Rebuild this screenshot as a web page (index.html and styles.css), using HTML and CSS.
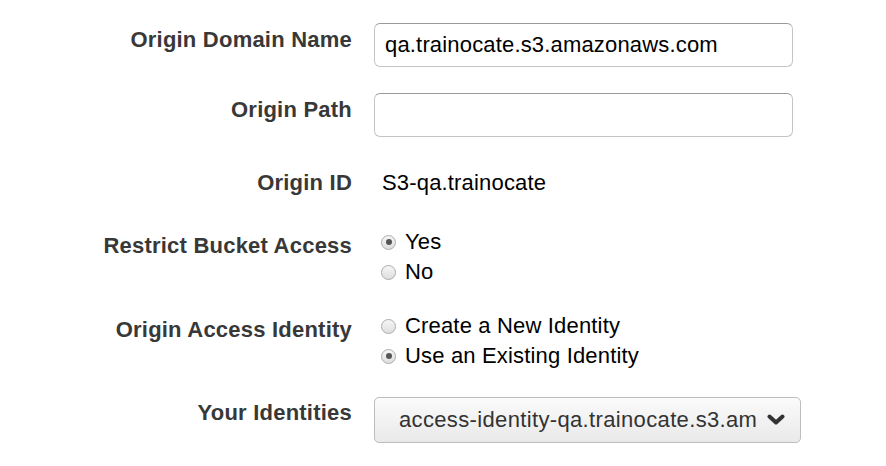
FILE: index.html
```html
<!DOCTYPE html>
<html>
<head>
<meta charset="utf-8">
<link rel="stylesheet" href="styles.css">
</head>
<body>
<form class="form">
  <div class="row row-domain">
    <label class="label label-input">Origin Domain Name</label>
    <div class="control"><input class="text-input" type="text" value="qa.trainocate.s3.amazonaws.com"></div>
  </div>
  <div class="row row-path">
    <label class="label label-input">Origin Path</label>
    <div class="control"><input class="text-input" type="text" value=""></div>
  </div>
  <div class="row row-id">
    <label class="label">Origin ID</label>
    <div class="control value">S3-qa.trainocate</div>
  </div>
  <div class="row row-restrict">
    <label class="label label-radio">Restrict Bucket Access</label>
    <div class="control radios">
      <div class="radio-line"><span class="radio checked"></span><span>Yes</span></div>
      <div class="radio-line"><span class="radio"></span><span>No</span></div>
    </div>
  </div>
  <div class="row row-oai">
    <label class="label label-radio">Origin Access Identity</label>
    <div class="control radios">
      <div class="radio-line"><span class="radio"></span><span>Create a New Identity</span></div>
      <div class="radio-line"><span class="radio checked"></span><span>Use an Existing Identity</span></div>
    </div>
  </div>
  <div class="row row-ident">
    <label class="label label-select">Your Identities</label>
    <div class="control">
      <div class="select">
        <span class="select-text">access-identity-qa.trainocate.s3.am</span>
        <svg class="chevron" width="18" height="12" viewBox="0 0 18 12"><path d="M2.5 2.5 L9 8.5 L15.5 2.5" fill="none" stroke="#333" stroke-width="4" stroke-linecap="round" stroke-linejoin="round"/></svg>
      </div>
    </div>
  </div>
</form>
</body>
</html>
```
FILE: styles.css
```css
html, body {
  margin: 0;
  background: #ffffff;
}
body {
  padding: 23px 0 0 8px;
  font-family: "Liberation Sans", Arial, Helvetica, sans-serif;
  font-size: 22px;
  letter-spacing: 0.17px;
  color: #000;
}
.form {
  display: flex;
  flex-direction: column;
}
.row {
  display: grid;
  grid-template-columns: 344px 1fr;
  column-gap: 22px;
  align-items: start;
}
.row-path { margin-top: 26px; }
.row-id { margin-top: 33px; align-items: baseline; }
.row-restrict { margin-top: 31px; }
.row-oai { margin-top: 24px; }
.row-ident { margin-top: 26px; }

.label {
  text-align: right;
  font-weight: bold;
  color: #383838;
  line-height: 26px;
  letter-spacing: 0.22px;
}
.label-input { padding-top: 4px; }
.label-radio { padding-top: 6px; }
.label-select { padding-top: 3px; }

.text-input {
  box-sizing: border-box;
  width: 419px;
  height: 44px;
  margin: 0;
  padding: 0 10px;
  border: 1.5px solid #c4c4c4;
  border-top-color: #9a9a9a;
  border-radius: 6px;
  font-family: inherit;
  font-size: 22px;
  letter-spacing: 0.17px;
  color: #000;
  background: #fff;
  outline: none;
}
.value {
  line-height: 26px;
  padding-left: 8px;
}
.radios {
  padding-left: 7px;
}
.radio-line {
  display: flex;
  align-items: center;
  gap: 9px;
  height: 30px;
}
.radio {
  box-sizing: border-box;
  width: 15px;
  height: 15px;
  border-radius: 50%;
  border: 1px solid #ababab;
  background: linear-gradient(#f6f6f6, #dedede);
  position: relative;
  flex: none;
}
.radio.checked::after {
  content: "";
  position: absolute;
  left: 3.5px;
  top: 3.5px;
  width: 6px;
  height: 6px;
  border-radius: 50%;
  background: #555;
}
.select {
  box-sizing: border-box;
  width: 427px;
  height: 46px;
  display: flex;
  align-items: center;
  justify-content: space-between;
  padding: 0 15px 0 24px;
  border: 1px solid #bdbdbd;
  border-radius: 5px;
  background: linear-gradient(#fbfbfb, #e9e9e9);
  color: #333;
  letter-spacing: 0.35px;
}
.select-text {
  white-space: nowrap;
  overflow: hidden;
}
.chevron {
  flex: none;
}
```
